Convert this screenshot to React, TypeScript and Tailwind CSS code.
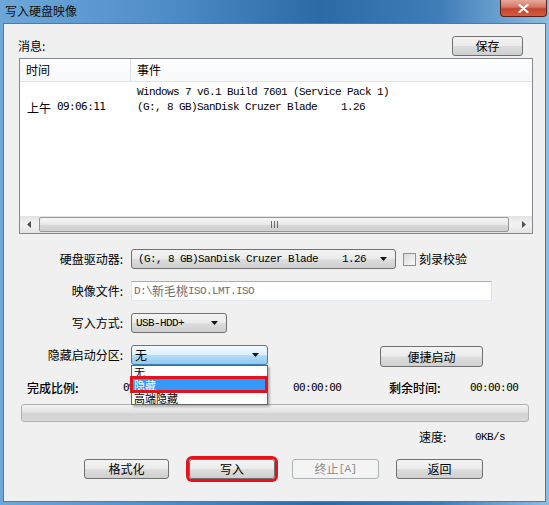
import type { ReactNode } from 'react';

const mono = "font-['Liberation_Mono',monospace] text-[11px] tracking-[-0.6px]";
const digits = "font-['DejaVu_Sans_Mono',monospace] text-[11px] tracking-[-0.6px]";

function Arrow() {
  return (
    <svg width="7" height="4" viewBox="0 0 7 4">
      <path d="M0 0h7L3.5 4z" fill="#111" />
    </svg>
  );
}

function Button({
  children,
  className = '',
  disabled = false,
}: {
  children: ReactNode;
  className?: string;
  disabled?: boolean;
}) {
  return (
    <div
      className={`flex h-[20px] items-center justify-center rounded-[3px] border text-[12px] ${
        disabled
          ? 'border-[#adb2b5] bg-[#f4f4f4] text-[#8d8d8d]'
          : 'border-[#707070] bg-[linear-gradient(#f4f4f4_0%,#ebebeb_48%,#dddddd_52%,#cfcfcf_100%)] text-black'
      } ${className}`}
    >
      {children}
    </div>
  );
}

function Label({ children }: { children: ReactNode }) {
  return <div className="w-[119px] shrink-0 text-right text-[12px] leading-[20px] text-black">{children}</div>;
}

export default function App() {
  return (
    <div className="flex h-[505px] w-[549px] flex-col overflow-hidden bg-[linear-gradient(90deg,#6ea8da_0%,#4f8dc8_30%,#2c6aa6_58%,#3f7db8_80%,#8cbde2_100%)] font-['Noto_Sans_CJK_SC',sans-serif] text-black">
      {/* Title bar */}
      <div className="flex h-[23px] shrink-0 items-start justify-between">
        <div className="pl-[5px] pt-[3px] text-[12px] leading-[16px] text-[#111]">写入硬盘映像</div>
        <div className="mr-[2px] flex h-[17px] w-[47px] items-center justify-center rounded-b-[4px] border border-t-0 border-[#5b2019] bg-[linear-gradient(#e9a99a_0%,#d27563_45%,#c4452f_55%,#d55c3f_100%)]">
          <svg width="11" height="9" viewBox="0 0 11 9">
            <path d="M1.5 1l8 7M9.5 1l-8 7" stroke="#fff" strokeWidth="2.2" strokeLinecap="round" />
          </svg>
        </div>
      </div>

      {/* Client area */}
      <div className="relative mx-[3px] flex h-[479px] flex-col border border-[#5d7791] bg-[#f0f0f0]">
        {/* 消息 + 保存 */}
        <div className="mt-[12px] flex h-[19px] items-center justify-between pl-[14px] pr-[22px]">
          <span className="text-[12px]">消息:</span>
          <Button className="h-[19px] w-[71px]">保存</Button>
        </div>

        {/* list view */}
        <div className="ml-[15px] mt-[3px] flex h-[176px] w-[514px] flex-col border border-[#828790] bg-white">
          <div className="flex h-[23px] shrink-0 border-b border-[#e5e5e5] bg-[linear-gradient(#ffffff,#f7f8fa)] text-[12px]">
            <div className="flex w-[111px] items-center border-r border-[#dcdfe4] pl-[6px]">时间</div>
            <div className="flex items-center pl-[6px]">事件</div>
          </div>
          <div className="pt-[3px]">
            <div className="flex h-[15px] items-center">
              <div className="w-[111px]" />
              <div className={`pl-[6px] whitespace-pre ${mono}`}>Windows 7 v6.1 Build 7601 (Service Pack 1)</div>
            </div>
            <div className="flex h-[15px] items-center">
              <div className="flex w-[111px] items-center pl-[7px]">
                <span className="text-[12px]">上午</span>
                <span className={`ml-[6px] ${digits}`}>09:06:11</span>
              </div>
              <div className={`pl-[6px] whitespace-pre ${mono}`}>(G:, 8 GB)SanDisk Cruzer Blade    1.26</div>
            </div>
          </div>
          <div className="flex-1" />
          {/* horizontal scrollbar */}
          <div className="flex h-[17px] shrink-0 items-center bg-[linear-gradient(#e3e3e3,#f0f0f0_40%,#f0f0f0_60%,#e3e3e3)]">
            <div className="flex h-full w-[17px] items-center justify-center">
              <svg width="4" height="7" viewBox="0 0 4 7">
                <path d="M4 0v7L0 3.5z" fill="#505050" />
              </svg>
            </div>
            <div className="ml-[2px] flex h-[15px] w-[470px] items-center justify-center gap-[2px] rounded-[2px] border border-[#979797] bg-[linear-gradient(#f6f6f6_0%,#e8e8e8_50%,#d6d6d6_51%,#d0d0d0_100%)]">
              <div className="h-[7px] w-[1px] bg-[#6a6a6a]" />
              <div className="h-[7px] w-[1px] bg-[#6a6a6a]" />
              <div className="h-[7px] w-[1px] bg-[#6a6a6a]" />
            </div>
            <div className="flex-1" />
            <div className="flex h-full w-[17px] items-center justify-center">
              <svg width="4" height="7" viewBox="0 0 4 7">
                <path d="M0 0v7L4 3.5z" fill="#505050" />
              </svg>
            </div>
          </div>
        </div>

        {/* 硬盘驱动器 */}
        <div className="mt-[15px] flex h-[20px] items-center">
          <Label>硬盘驱动器:</Label>
          <div className="ml-[8px] flex h-[20px] w-[265px] items-center justify-between rounded-[3px] border border-[#707070] bg-[linear-gradient(#f4f4f4_0%,#ebebeb_48%,#dddddd_52%,#cfcfcf_100%)] pl-[6px] pr-[8px]">
            <span className={`whitespace-pre ${mono}`}>(G:, 8 GB)SanDisk Cruzer Blade    1.26</span>
            <Arrow />
          </div>
          <div className="ml-[7px] h-[13px] w-[13px] border border-[#8e8f8f] bg-[linear-gradient(135deg,#d8d8d8,#fbfbfb)]" />
          <span className="ml-[3px] text-[12px]">刻录校验</span>
        </div>

        {/* 映像文件 */}
        <div className="mt-[12px] flex h-[20px] items-center">
          <Label>映像文件:</Label>
          <div className="ml-[8px] flex h-[20px] w-[361px] items-center border border-[#abadb3] border-b-[#e3e9ef] border-l-[#e2e3ea] border-r-[#dbdfe6] bg-white pl-[2px] text-[#6d6d6d]">
            <span className={`whitespace-pre ${mono}`}>D:\</span>
            <span className="text-[12px]">新毛桃</span>
            <span className={`whitespace-pre ${mono}`}>ISO.LMT.ISO</span>
          </div>
        </div>

        {/* 写入方式 */}
        <div className="mt-[12px] flex h-[20px] items-center">
          <Label>写入方式:</Label>
          <div className="ml-[8px] flex h-[20px] w-[96px] items-center justify-between rounded-[3px] border border-[#707070] bg-[linear-gradient(#f4f4f4_0%,#ebebeb_48%,#dddddd_52%,#cfcfcf_100%)] pl-[4px] pr-[8px]">
            <span className={`whitespace-pre ${mono}`}>USB-HDD+</span>
            <Arrow />
          </div>
        </div>

        {/* 隐藏启动分区 */}
        <div className="mt-[12px] flex h-[20px] items-center">
          <Label>隐藏启动分区:</Label>
          <div className="ml-[8px] flex h-[20px] w-[137px] items-center justify-between rounded-[3px] border border-[#3c7fb1] bg-[linear-gradient(#f4fafe_0%,#dbeffc_48%,#b5dcf6_52%,#8ec9f0_100%)] pl-[3px] pr-[8px]">
            <span className="text-[12px]">无</span>
            <Arrow />
          </div>
          <Button className="ml-[112px] mt-[3px] h-[21px] w-[103px]">便捷启动</Button>
        </div>

        {/* 完成比例 */}
        <div className="mt-[15px] flex h-[16px] items-center text-[12px]">
          <span className="ml-[23px] w-[96px] font-medium">完成比例:</span>
          <span className={`w-[170px] ${digits}`}>0%</span>
          <span className={`w-[96px] ${digits}`}>00:00:00</span>
          <span className="w-[81px] font-medium">剩余时间:</span>
          <span className={digits}>00:00:00</span>
        </div>

        {/* progress */}
        <div className="ml-[17px] mt-[8px] h-[18px] w-[508px] rounded-[3px] border border-[#b2b2b2] bg-[linear-gradient(#f3f3f3_0%,#e2e2e2_45%,#d2d2d2_55%,#dadada_100%)]" />

        {/* 速度 */}
        <div className="mt-[7px] flex h-[16px] items-center text-[12px]">
          <span className="ml-[415px] w-[56px]">速度:</span>
          <span className={mono}>0KB/s</span>
        </div>

        {/* buttons */}
        <div className="mt-[14px] flex h-[20px] items-center">
          <Button className="ml-[80px] w-[85px]">格式化</Button>
          <Button className="ml-[20px] w-[86px] shadow-[0_0_0_3px_#e3121b]">写入</Button>
          <Button disabled className="ml-[17px] w-[87px]">
            终止<span className={mono}>[A]</span>
          </Button>
          <Button className="ml-[17px] w-[87px]">返回</Button>
        </div>

        {/* open dropdown list */}
        <div className="absolute left-[127px] top-[341px] flex h-[40px] w-[137px] flex-col border border-[#646464] bg-white text-[11px] shadow-[2px_2px_2px_rgba(0,0,0,0.25)]">
          <div className="flex h-[12px] items-center pl-[2px] leading-[11px]">无</div>
          <div className="flex h-[14px] items-center bg-[#3399ff] pl-[2px] leading-[11px] text-white">隐藏</div>
          <div className="flex h-[12px] items-center pl-[2px] leading-[11px]">高端隐藏</div>
          <div className="absolute left-[-2px] top-[10px] h-[17px] w-[138px] border-[3px] border-[#e3121b]" />
        </div>
      </div>
    </div>
  );
}
